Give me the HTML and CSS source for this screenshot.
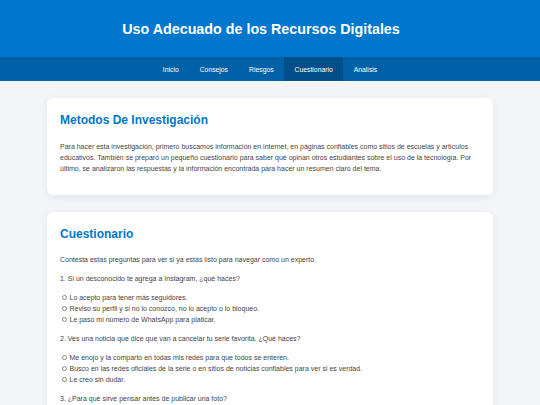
FILE: index.html
```html
<!DOCTYPE html>
<html lang="es">
<head>
<meta charset="utf-8">
<title>Uso Adecuado de los Recursos Digitales</title>
<link rel="stylesheet" href="styles.css">
</head>
<body>
<header class="site-header">
  <h1 class="site-title">Uso Adecuado de los Recursos Digitales</h1>
</header>
<nav class="site-nav">
  <a class="nav-link" href="#">Inicio</a>
  <a class="nav-link" href="#">Consejos</a>
  <a class="nav-link" href="#">Riesgos</a>
  <a class="nav-link active" href="#">Cuestionario</a>
  <a class="nav-link" href="#">Analisis</a>
</nav>
<main class="content">
  <section class="card">
    <h2 class="card-title">Metodos De Investigación</h2>
    <p class="text">Para hacer esta investigación, primero buscamos información en internet, en páginas confiables como sitios de escuelas y artículos educativos. También se preparó un pequeño cuestionario para saber qué opinan otros estudiantes sobre el uso de la tecnología. Por último, se analizaron las respuestas y la información encontrada para hacer un resumen claro del tema.</p>
  </section>
  <section class="card">
    <h2 class="card-title">Cuestionario</h2>
    <p class="text">Contesta estas preguntas para ver si ya estás listo para navegar como un experto.</p>
    <p class="text">1. Si un desconocido te agrega a Instagram, ¿qué haces?</p>
    <div class="options">
      <label class="option"><span class="radio"></span>Lo acepto para tener más seguidores.</label>
      <label class="option"><span class="radio"></span>Reviso su perfil y si no lo conozco, no lo acepto o lo bloqueo.</label>
      <label class="option"><span class="radio"></span>Le paso mi número de WhatsApp para platicar.</label>
    </div>
    <p class="text">2. Ves una noticia que dice que van a cancelar tu serie favorita. ¿Qué haces?</p>
    <div class="options">
      <label class="option"><span class="radio"></span>Me enojo y la comparto en todas mis redes para que todos se enteren.</label>
      <label class="option"><span class="radio"></span>Busco en las redes oficiales de la serie o en sitios de noticias confiables para ver si es verdad.</label>
      <label class="option"><span class="radio"></span>Le creo sin dudar.</label>
    </div>
    <p class="text">3. ¿Para qué sirve pensar antes de publicar una foto?</p>
    <div class="options">
      <label class="option"><span class="radio"></span>Para que nadie la vea.</label>
      <label class="option"><span class="radio"></span>Para evitar problemas y cuidar mi privacidad.</label>
      <label class="option"><span class="radio"></span>No sirve de nada.</label>
    </div>
  </section>
</main>
</body>
</html>
```

FILE: styles.css
```css
* { box-sizing: border-box; }
html, body { margin: 0; padding: 0; }
body {
  background: #f3f5f8;
  font-family: "Liberation Sans", Arial, sans-serif;
  font-size: 7px;
  line-height: 11px;
  color: #444;
}
.site-header {
  background: #0077cc;
  height: 57px;
  display: flex;
  align-items: center;
  justify-content: center;
  padding-right: 18px;
}
.site-title {
  margin: 0;
  color: #fff;
  font-size: 14.3px;
  line-height: 18px;
  font-weight: bold;
}
.site-nav {
  background: #0061a8;
  height: 24px;
  display: flex;
  justify-content: center;
  align-items: stretch;
}
.nav-link {
  display: flex;
  align-items: center;
  padding: 0 10.5px;
  color: #fff;
  text-decoration: none;
  font-size: 6.8px;
}
.nav-link.active { background: #004f8a; }
.content {
  padding: 17px 47px;
  display: flex;
  flex-direction: column;
  gap: 17px;
}
.card {
  background: #fff;
  border-radius: 6px;
  box-shadow: 0 2px 10px rgba(0, 0, 0, 0.07);
  padding: 13px 13px 13px;
}
.card-title {
  margin: 0 0 10.5px;
  color: #0077cc;
  font-size: 12px;
  line-height: 19px;
  font-weight: bold;
}
.text { margin: 0 0 8px; }
.options { margin: 0 0 8px; }
.option {
  display: flex;
  align-items: center;
}
.radio {
  width: 5px;
  height: 5px;
  border: 0.7px solid #8a8a8a;
  border-radius: 50%;
  margin: 0 3px 0 1.5px;
  flex: none;
}
```
